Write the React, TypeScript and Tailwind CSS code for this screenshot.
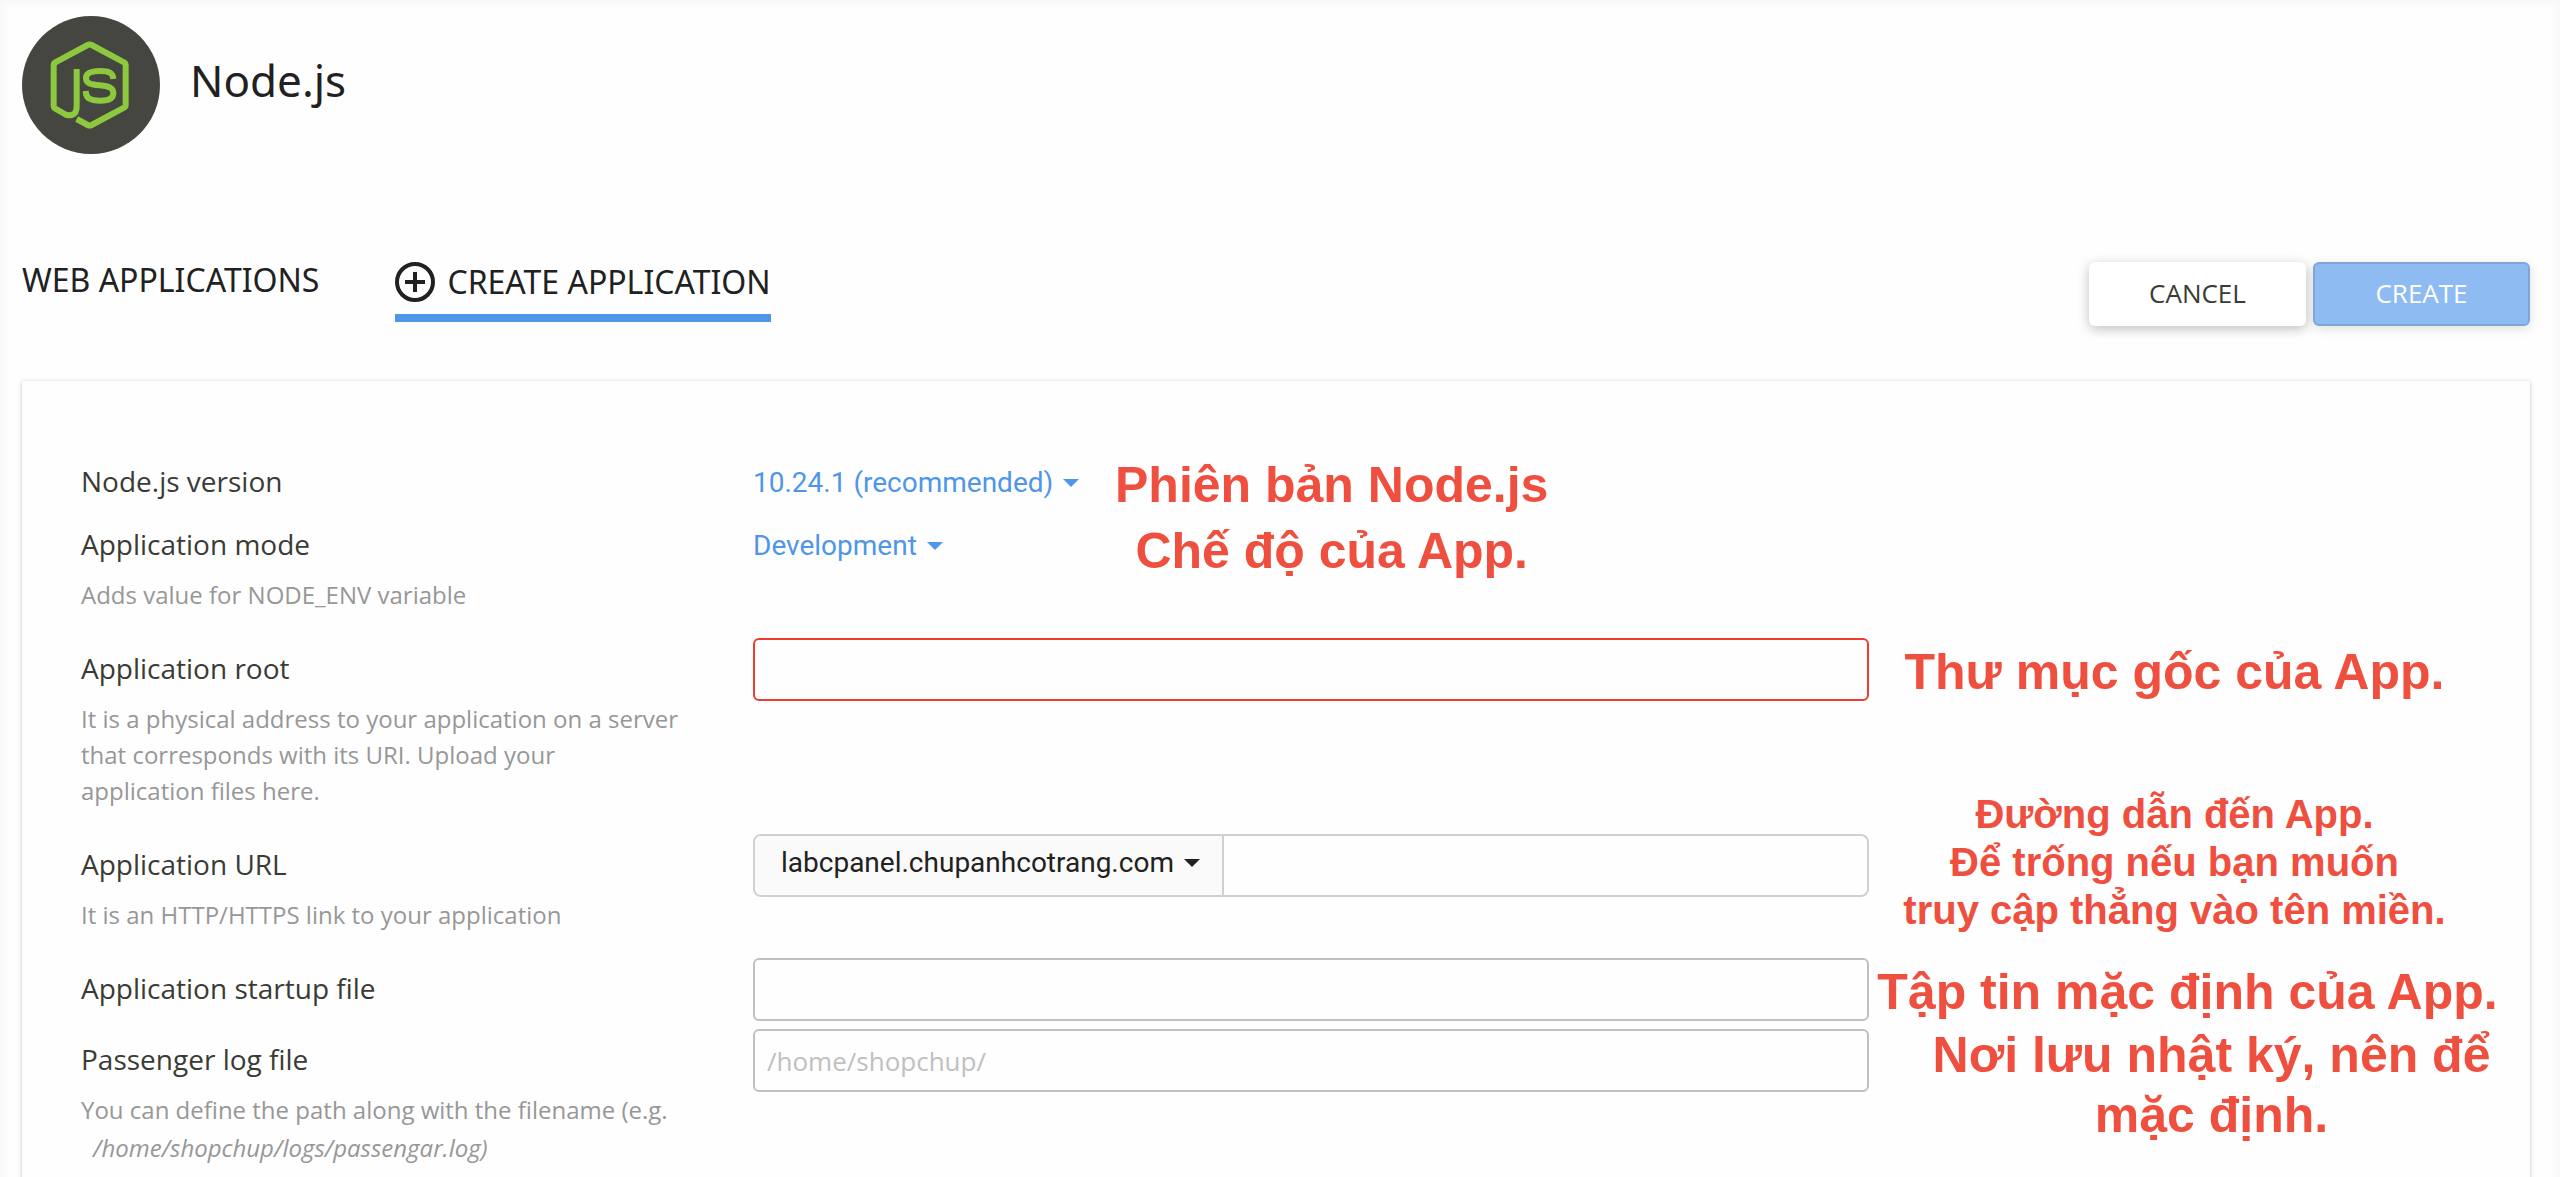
import { useState, type ReactNode } from "react";

const NodeLogo = () => (
  <svg viewBox="0 0 414 414" className="size-[138px] shrink-0" fill="none" aria-hidden="true">
    <circle cx="207" cy="207" r="207" fill="#45463f" />
    <g stroke="#8cc93e" strokeWidth="18" strokeLinejoin="round">
      <path d="M164 159V270C164 290 156 298 141 298Q134 298 128 294L100 278Q95 275 95 269V148Q95 142 100 139L197 87Q203 84 209 87L306 139Q311 142 311 148V266Q311 272 306 275L209 327Q203 330 197 327L164 309" />
      <path d="M274 189C273 170 260 165 234 165C205 165 192 172 192 186C192 203 206 205 234 208C262 211 274 216 274 231C274 248 261 254 236 254C203 254 192 247 191 225" />
    </g>
  </svg>
);

const PlusCircle = () => (
  <svg viewBox="0 0 40 40" className="size-10 shrink-0" fill="none" stroke="#212121" aria-hidden="true">
    <circle cx="20" cy="20" r="18" strokeWidth="4" />
    <path d="M20 10V30M10 20H30" strokeWidth="4" />
  </svg>
);

const Caret = ({ className = "" }: { className?: string }) => (
  <svg viewBox="0 0 16 8" className={`h-2 w-4 ${className}`} fill="currentColor" aria-hidden="true">
    <path d="M0 0H16L8 8Z" />
  </svg>
);

type DropdownProps = {
  id: string;
  options: string[];
  className?: string;
};

const Dropdown = ({ id, options, className = "" }: DropdownProps) => {
  const [value, setValue] = useState(options[0]);

  return (
    <div className={`flex items-center font-[Roboto,sans-serif] text-[28px] leading-[42px] ${className}`}>
      <select
        id={id}
        value={value}
        onChange={e => setValue(e.target.value)}
        className="field-sizing-content appearance-none bg-transparent outline-none cursor-pointer"
      >
        {options.map(option => <option key={option}>{option}</option>)}
      </select>
      <Caret className="ml-2.5" />
    </div>
  );
};

type FieldRowProps = {
  id: string;
  label: string;
  hint?: ReactNode;
  note?: ReactNode;
  className?: string;
  children: ReactNode;
};

// The note never adds to the row's height
const FieldRow = ({ id, label, hint, note, className = "", children }: FieldRowProps) => (
  <div className={`grid grid-cols-[672fr_1116fr_661fr] ${className}`}>
    <div className="min-w-0 pt-[9px]">
      <label htmlFor={id} className="block text-[28px] leading-[42px] text-[#3a3b35]">{label}</label>
      {hint && <p className="mt-3 max-w-[597px] text-2xl leading-9 text-[#979797]">{hint}</p>}
    </div>
    <div className="min-w-0">{children}</div>
    <div className="h-0 min-w-0">{note}</div>
  </div>
);

const noteStyle = "text-center whitespace-nowrap font-bold text-[#ee4f3e] font-[Liberation_Sans,Arial,sans-serif]";

const App = () => {
  const [appRoot, setAppRoot] = useState("");
  const [appPath, setAppPath] = useState("");
  const [startupFile, setStartupFile] = useState("");
  const [logFile, setLogFile] = useState("");

  return (
    <div className="min-h-screen overflow-hidden bg-[#fefefe] px-[22px] pt-4 font-[Open_Sans,sans-serif] shadow-[inset_0_0_12px_#f3f3f3]">
      <header className="flex items-center gap-[30px]">
        <NodeLogo />
        <h1 className="pb-2.5 font-[Noto_Sans,sans-serif] text-[44px] leading-[60px] text-[#212121]">Node.js</h1>
      </header>

      <div className="mt-[108px] flex items-start justify-between pr-2">
        <nav className="flex items-start gap-[76px] font-[Noto_Sans,sans-serif] text-[32px] leading-9 text-[#212121]">
          <a href="#applications">WEB APPLICATIONS</a>
          <a href="#create" className="flex items-center gap-3 border-b-8 border-[#4f96ea] pb-3">
            <PlusCircle />
            CREATE APPLICATION
          </a>
        </nav>
        <div className="flex gap-[7px] text-[26px]">
          <button
            type="button"
            className="h-16 w-[217px] rounded-md bg-white pb-0.5 text-[#3a3b35] shadow-[0_3px_12px_rgba(0,0,0,0.25)]"
          >
            CANCEL
          </button>
          <button
            type="submit"
            form="create-form"
            className="h-16 w-[217px] rounded-md border-2 border-[#7ea7d8] bg-[#8dbbf2] pb-0.5 text-white shadow-[0_3px_12px_rgba(0,0,0,0.12)]"
          >
            CREATE
          </button>
        </div>
      </div>

      <form
        id="create-form"
        onSubmit={e => e.preventDefault()}
        className="mt-[55px] mr-2 min-h-[820px] bg-[#fefefe] pt-[70px] pl-[59px] shadow-[0_1px_4px_rgba(0,0,0,0.25)]"
      >
        <div className="relative">
          <FieldRow id="version" label="Node.js version" className="pb-3">
            <Dropdown
              id="version"
              options={["10.24.1 (recommended)", "11.15.0", "12.22.9"]}
              className="-mb-3 pt-[11px] text-[#4f96ea]"
            />
          </FieldRow>
          <FieldRow id="mode" label="Application mode" hint="Adds value for NODE_ENV variable" className="pb-[25px]">
            <Dropdown id="mode" options={["Development", "Production"]} className="pt-[11px] text-[#4f96ea]" />
          </FieldRow>
          <div className={`absolute top-px left-[1034px] text-[50px] leading-[66px] ${noteStyle}`}>
            <p>Phiên bản Node.js</p>
            <p>Chế độ của App.</p>
          </div>
        </div>

        <FieldRow
          id="root"
          label="Application root"
          hint="It is a physical address to your application on a server that corresponds with its URI. Upload your application files here."
          note={<p className={`pr-[50px] text-[50px] leading-[68px] ${noteStyle}`}>Thư mục gốc của App.</p>}
          className="pb-[25px]"
        >
          <input
            id="root"
            type="text"
            value={appRoot}
            onChange={e => setAppRoot(e.target.value)}
            className="block h-[63px] w-full rounded-md border-2 border-[#ee3d2f] px-3 text-[26px] outline-none"
          />
        </FieldRow>

        <FieldRow
          id="domain"
          label="Application URL"
          hint="It is an HTTP/HTTPS link to your application"
          note={
            <div className={`-mt-11 pr-[50px] text-[40px] leading-[48px] ${noteStyle}`}>
              <p>Đường dẫn đến App.</p>
              <p>Để trống nếu bạn muốn</p>
              <p>truy cập thẳng vào tên miền.</p>
            </div>
          }
          className="pb-[25px]"
        >
          <div className="flex h-[63px] overflow-hidden rounded-lg border-2 border-[#d0d0d0]">
            <Dropdown
              id="domain"
              options={["labcpanel.chupanhcotrang.com"]}
              className="border-r-2 border-[#d0d0d0] bg-[#fafafa] pr-[22px] pb-1.5 pl-[26px] text-[#212121]"
            />
            <input
              type="text"
              aria-label="Application path"
              value={appPath}
              onChange={e => setAppPath(e.target.value)}
              className="min-w-0 flex-1 px-3 text-[26px] outline-none"
            />
          </div>
        </FieldRow>

        <FieldRow
          id="startup"
          label="Application startup file"
          note={<p className={`pr-6 text-[50px] leading-[68px] ${noteStyle}`}>Tập tin mặc định của App.</p>}
          className="pb-2"
        >
          <input
            id="startup"
            type="text"
            value={startupFile}
            onChange={e => setStartupFile(e.target.value)}
            className="block h-[63px] w-full rounded-md border-2 border-[#c0c0c0] px-3 text-[26px] outline-none"
          />
        </FieldRow>

        <FieldRow
          id="log"
          label="Passenger log file"
          hint={
            <>
              You can define the path along with the filename (e.g.
              <em className="block pt-0.5 pl-3">/home/shopchup/logs/passengar.log)</em>
            </>
          }
          note={
            <div className={`-mt-1 pl-6 text-[50px] leading-[60px] ${noteStyle}`}>
              <p>Nơi lưu nhật ký, nên để</p>
              <p>mặc định.</p>
            </div>
          }
        >
          <input
            id="log"
            type="text"
            value={logFile}
            onChange={e => setLogFile(e.target.value)}
            placeholder="/home/shopchup/"
            className="block h-[63px] w-full rounded-md border-2 border-[#c0c0c0] px-3 text-[26px] outline-none placeholder:text-[#c0c0c0]"
          />
        </FieldRow>
      </form>
    </div>
  );
};

export default App;
